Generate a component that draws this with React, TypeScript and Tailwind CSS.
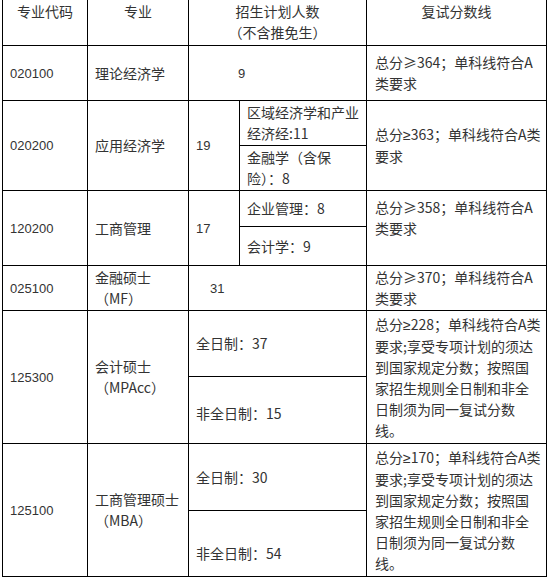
import React from "react";

const cjk = "font-['Noto_Sans_CJK_SC','Noto_Sans',sans-serif]";
const num = "font-['Liberation_Sans','Arial',sans-serif] text-[13px]";
const narrow = "font-['Liberation_Sans','Arial',sans-serif]";

const cell = "bg-white flex items-center text-[#333] text-[14px] leading-[21px] whitespace-nowrap";
const head = "bg-white flex justify-center items-start pt-[1px] text-center text-[#333] text-[14px] leading-[21px] whitespace-nowrap";

function Lines({ lines }: { lines: React.ReactNode[] }) {
  return (
    <div>
      {lines.map((l, i) => (
        <div key={i}>{l}</div>
      ))}
    </div>
  );
}

function Narrow({ score, tail }: { score: string; tail: string }) {
  return (
    <>
      总分<span className={narrow}>≥</span>
      {score}；单科线符合A{tail}
    </>
  );
}

export default function App() {
  const longText = (score: string) => [
    <Narrow key="a" score={score} tail="类" />,
    "要求;享受专项计划的须达",
    "到国家规定分数；按照国",
    "家招生规则全日制和非全",
    "日制须为同一复试分数",
    "线。",
  ];
  return (
    <div className={`w-[552px] h-[580px] bg-white overflow-hidden ${cjk}`}>
      <div className="ml-[2px] mt-[-1px] w-[545px] grid grid-cols-[84px_100px_50px_126px_179px] grid-rows-[45px_54px_44px_44px_35px_38px_44px_65px_66px_66px_65px] gap-px p-px bg-black">
        {/* header */}
        <div className={`${head} col-start-1 row-start-1`}>专业代码</div>
        <div className={`${head} col-start-2 row-start-1`}>专业</div>
        <div className={`${head} col-start-3 col-span-2 row-start-1`}>
          <Lines lines={["招生计划人数", "（不含推免生）"]} />
        </div>
        <div className={`${head} col-start-5 row-start-1`}>复试分数线</div>

        {/* row 1 */}
        <div className={`${cell} col-start-1 row-start-2 pl-[7px]`}><span className={num}>020100</span></div>
        <div className={`${cell} col-start-2 row-start-2 pl-[7px]`}>理论经济学</div>
        <div className={`${cell} col-start-3 col-span-2 row-start-2 pl-[49px]`}><span className={num}>9</span></div>
        <div className={`${cell} col-start-5 row-start-2 pl-[8px]`}>
          <Lines lines={["总分≥364；单科线符合A", "类要求"]} />
        </div>

        {/* row 2 */}
        <div className={`${cell} col-start-1 row-start-3 row-span-2 pl-[7px]`}><span className={num}>020200</span></div>
        <div className={`${cell} col-start-2 row-start-3 row-span-2 pl-[7px]`}>应用经济学</div>
        <div className={`${cell} col-start-3 row-start-3 row-span-2 pl-[7px]`}><span className={num}>19</span></div>
        <div className={`${cell} col-start-4 row-start-3 pl-[7px]`}>
          <Lines lines={["区域经济学和产业", "经济经:11"]} />
        </div>
        <div className={`${cell} col-start-4 row-start-4 pl-[7px]`}>
          <Lines lines={["金融学（含保", "险）：8"]} />
        </div>
        <div className={`${cell} col-start-5 row-start-3 row-span-2 pl-[8px]`}>
          <Lines lines={[<Narrow key="a" score="363" tail="类" />, "要求"]} />
        </div>

        {/* row 3 */}
        <div className={`${cell} col-start-1 row-start-5 row-span-2 pl-[7px]`}><span className={num}>120200</span></div>
        <div className={`${cell} col-start-2 row-start-5 row-span-2 pl-[7px]`}>工商管理</div>
        <div className={`${cell} col-start-3 row-start-5 row-span-2 pl-[7px]`}><span className={num}>17</span></div>
        <div className={`${cell} col-start-4 row-start-5 pl-[7px]`}>企业管理：8</div>
        <div className={`${cell} col-start-4 row-start-6 pl-[7px]`}>会计学：9</div>
        <div className={`${cell} col-start-5 row-start-5 row-span-2 pl-[8px] pb-[20px]`}>
          <Lines lines={["总分≥358；单科线符合A", "类要求"]} />
        </div>

        {/* row 4 */}
        <div className={`${cell} col-start-1 row-start-7 pl-[7px]`}><span className={num}>025100</span></div>
        <div className={`${cell} col-start-2 row-start-7 pl-[7px]`}>
          <Lines lines={["金融硕士", "（MF）"]} />
        </div>
        <div className={`${cell} col-start-3 col-span-2 row-start-7 pl-[21px]`}><span className={num}>31</span></div>
        <div className={`${cell} col-start-5 row-start-7 pl-[8px]`}>
          <Lines lines={["总分≥370；单科线符合A", "类要求"]} />
        </div>

        {/* row 5 */}
        <div className={`${cell} col-start-1 row-start-8 row-span-2 pl-[7px]`}><span className={num}>125300</span></div>
        <div className={`${cell} col-start-2 row-start-8 row-span-2 pl-[7px]`}>
          <Lines lines={["会计硕士", "（MPAcc）"]} />
        </div>
        <div className={`${cell} col-start-3 col-span-2 row-start-8 pl-[7px]`}>全日制：37</div>
        <div className={`${cell} col-start-3 col-span-2 row-start-9 pl-[7px] pt-[6px]`}>非全日制：15</div>
        <div className={`${cell} col-start-5 row-start-8 row-span-2 pl-[8px]`}>
          <Lines lines={longText("228")} />
        </div>

        {/* row 6 */}
        <div className={`${cell} col-start-1 row-start-10 row-span-2 pl-[7px]`}><span className={num}>125100</span></div>
        <div className={`${cell} col-start-2 row-start-10 row-span-2 pl-[7px]`}>
          <Lines lines={["工商管理硕士", "（MBA）"]} />
        </div>
        <div className={`${cell} col-start-3 col-span-2 row-start-10 pl-[7px]`}>全日制：30</div>
        <div className={`${cell} col-start-3 col-span-2 row-start-11 pl-[7px] pt-[20px]`}>非全日制：54</div>
        <div className={`${cell} col-start-5 row-start-10 row-span-2 pl-[8px]`}>
          <Lines lines={longText("170")} />
        </div>
      </div>
    </div>
  );
}
